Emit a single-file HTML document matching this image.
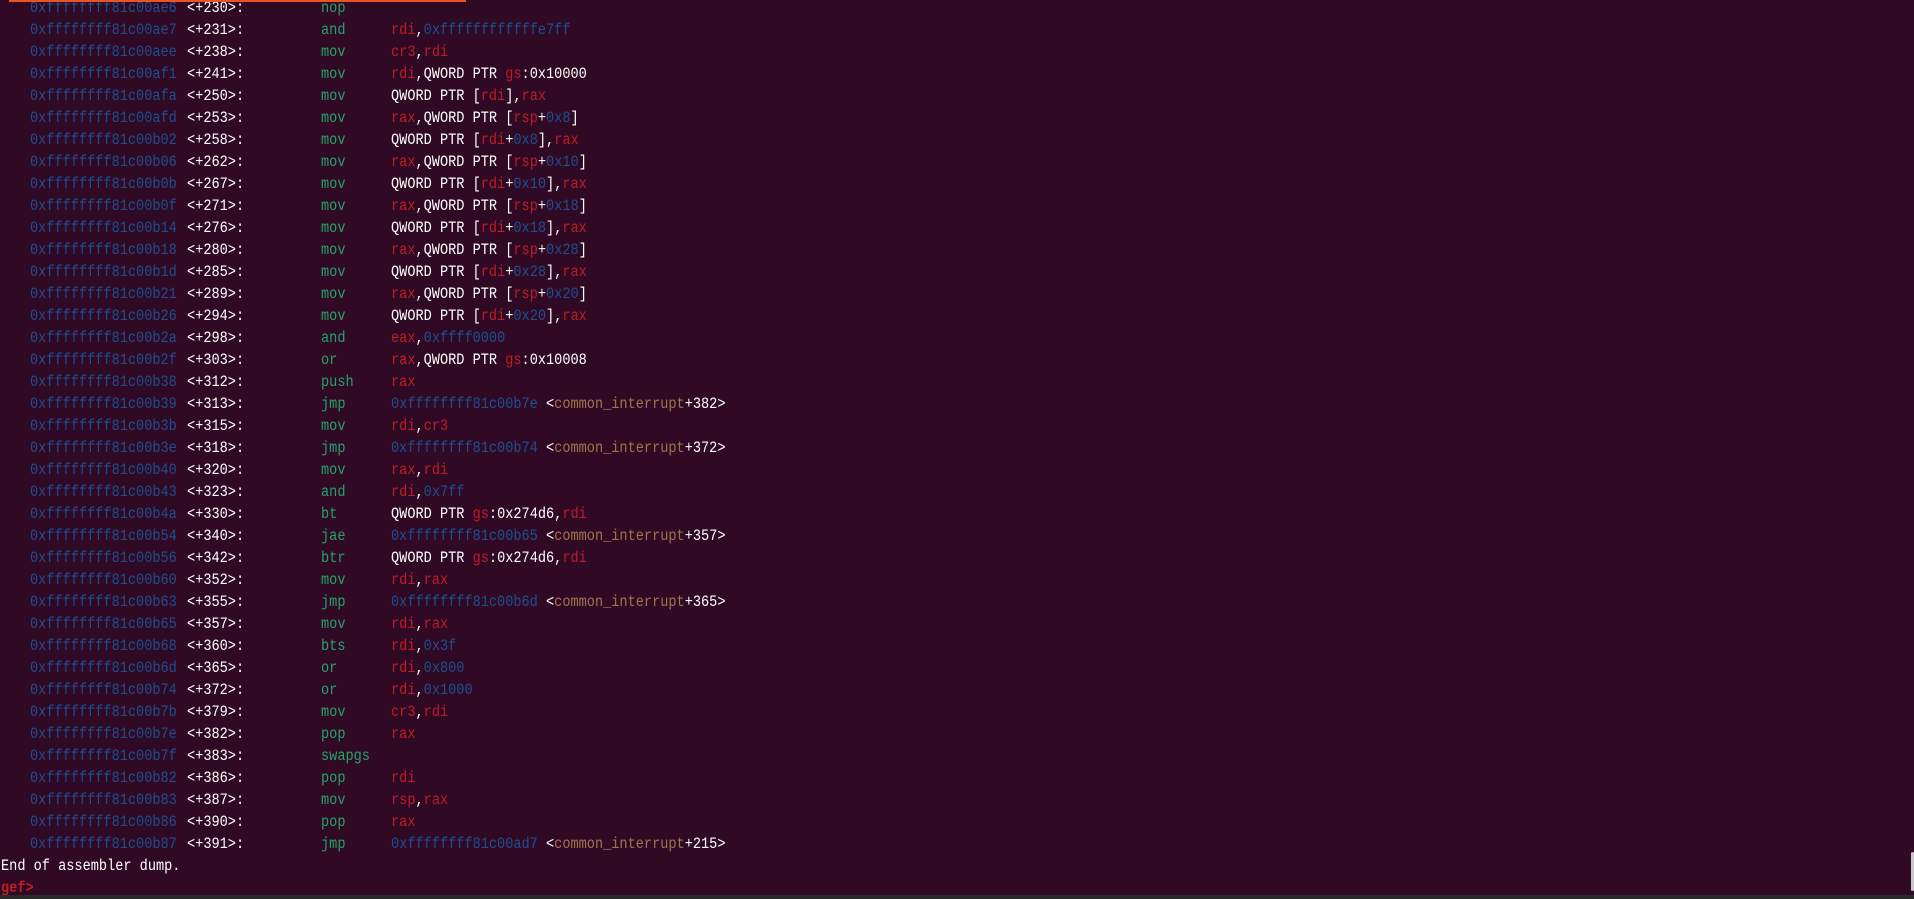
<!DOCTYPE html>
<html><head><meta charset="utf-8"><style>
html,body{margin:0;padding:0;width:1914px;height:899px;overflow:hidden;background:#300a24;}
body{position:relative;font-family:"Liberation Mono","DejaVu Sans Mono",monospace;font-size:13.6px;color:#fff;}
#w{position:absolute;left:0;top:3px;width:1914px;height:896px;}
.l{position:absolute;left:0;height:22px;line-height:22px;white-space:pre;width:1900px;}
.l span{position:absolute;top:0;transform:scaleY(1.15);transform-origin:50% 55%;}
.a{left:30px;color:#1d4f91}
.o{left:187px;color:#fff}
.m{left:321px;color:#26a269}
.p{left:391px;color:#fff}
.p i{font-style:normal}
.r{color:#c01c28}.b{color:#1d4f91}.y{color:#a2734c}
#bar{position:absolute;left:9px;top:0;width:457px;height:2px;background:#e95420;z-index:2}
#sb{position:absolute;left:1911px;top:852px;width:3px;height:39px;background:#c8c8c8;border-radius:2px}
#bot{position:absolute;left:0;top:895px;width:1914px;height:4px;background:#2a2a2a}
</style></head><body>
<div id="bar"></div>
<div id="w">
<div class="l" style="top:-4px"><span class="a">0xffffffff81c00ae6</span><span class="o">&lt;+230&gt;:</span><span class="m">nop</span></div>
<div class="l" style="top:18px"><span class="a">0xffffffff81c00ae7</span><span class="o">&lt;+231&gt;:</span><span class="m">and</span><span class="p"><i class="r">rdi</i>,<i class="b">0xffffffffffffe7ff</i></span></div>
<div class="l" style="top:40px"><span class="a">0xffffffff81c00aee</span><span class="o">&lt;+238&gt;:</span><span class="m">mov</span><span class="p"><i class="r">cr3</i>,<i class="r">rdi</i></span></div>
<div class="l" style="top:62px"><span class="a">0xffffffff81c00af1</span><span class="o">&lt;+241&gt;:</span><span class="m">mov</span><span class="p"><i class="r">rdi</i>,QWORD PTR <i class="r">gs</i>:0x10000</span></div>
<div class="l" style="top:84px"><span class="a">0xffffffff81c00afa</span><span class="o">&lt;+250&gt;:</span><span class="m">mov</span><span class="p">QWORD PTR [<i class="r">rdi</i>],<i class="r">rax</i></span></div>
<div class="l" style="top:106px"><span class="a">0xffffffff81c00afd</span><span class="o">&lt;+253&gt;:</span><span class="m">mov</span><span class="p"><i class="r">rax</i>,QWORD PTR [<i class="r">rsp</i>+<i class="b">0x8</i>]</span></div>
<div class="l" style="top:128px"><span class="a">0xffffffff81c00b02</span><span class="o">&lt;+258&gt;:</span><span class="m">mov</span><span class="p">QWORD PTR [<i class="r">rdi</i>+<i class="b">0x8</i>],<i class="r">rax</i></span></div>
<div class="l" style="top:150px"><span class="a">0xffffffff81c00b06</span><span class="o">&lt;+262&gt;:</span><span class="m">mov</span><span class="p"><i class="r">rax</i>,QWORD PTR [<i class="r">rsp</i>+<i class="b">0x10</i>]</span></div>
<div class="l" style="top:172px"><span class="a">0xffffffff81c00b0b</span><span class="o">&lt;+267&gt;:</span><span class="m">mov</span><span class="p">QWORD PTR [<i class="r">rdi</i>+<i class="b">0x10</i>],<i class="r">rax</i></span></div>
<div class="l" style="top:194px"><span class="a">0xffffffff81c00b0f</span><span class="o">&lt;+271&gt;:</span><span class="m">mov</span><span class="p"><i class="r">rax</i>,QWORD PTR [<i class="r">rsp</i>+<i class="b">0x18</i>]</span></div>
<div class="l" style="top:216px"><span class="a">0xffffffff81c00b14</span><span class="o">&lt;+276&gt;:</span><span class="m">mov</span><span class="p">QWORD PTR [<i class="r">rdi</i>+<i class="b">0x18</i>],<i class="r">rax</i></span></div>
<div class="l" style="top:238px"><span class="a">0xffffffff81c00b18</span><span class="o">&lt;+280&gt;:</span><span class="m">mov</span><span class="p"><i class="r">rax</i>,QWORD PTR [<i class="r">rsp</i>+<i class="b">0x28</i>]</span></div>
<div class="l" style="top:260px"><span class="a">0xffffffff81c00b1d</span><span class="o">&lt;+285&gt;:</span><span class="m">mov</span><span class="p">QWORD PTR [<i class="r">rdi</i>+<i class="b">0x28</i>],<i class="r">rax</i></span></div>
<div class="l" style="top:282px"><span class="a">0xffffffff81c00b21</span><span class="o">&lt;+289&gt;:</span><span class="m">mov</span><span class="p"><i class="r">rax</i>,QWORD PTR [<i class="r">rsp</i>+<i class="b">0x20</i>]</span></div>
<div class="l" style="top:304px"><span class="a">0xffffffff81c00b26</span><span class="o">&lt;+294&gt;:</span><span class="m">mov</span><span class="p">QWORD PTR [<i class="r">rdi</i>+<i class="b">0x20</i>],<i class="r">rax</i></span></div>
<div class="l" style="top:326px"><span class="a">0xffffffff81c00b2a</span><span class="o">&lt;+298&gt;:</span><span class="m">and</span><span class="p"><i class="r">eax</i>,<i class="b">0xffff0000</i></span></div>
<div class="l" style="top:348px"><span class="a">0xffffffff81c00b2f</span><span class="o">&lt;+303&gt;:</span><span class="m">or</span><span class="p"><i class="r">rax</i>,QWORD PTR <i class="r">gs</i>:0x10008</span></div>
<div class="l" style="top:370px"><span class="a">0xffffffff81c00b38</span><span class="o">&lt;+312&gt;:</span><span class="m">push</span><span class="p"><i class="r">rax</i></span></div>
<div class="l" style="top:392px"><span class="a">0xffffffff81c00b39</span><span class="o">&lt;+313&gt;:</span><span class="m">jmp</span><span class="p"><i class="b">0xffffffff81c00b7e</i> &lt;<i class="y">common_interrupt</i>+382&gt;</span></div>
<div class="l" style="top:414px"><span class="a">0xffffffff81c00b3b</span><span class="o">&lt;+315&gt;:</span><span class="m">mov</span><span class="p"><i class="r">rdi</i>,<i class="r">cr3</i></span></div>
<div class="l" style="top:436px"><span class="a">0xffffffff81c00b3e</span><span class="o">&lt;+318&gt;:</span><span class="m">jmp</span><span class="p"><i class="b">0xffffffff81c00b74</i> &lt;<i class="y">common_interrupt</i>+372&gt;</span></div>
<div class="l" style="top:458px"><span class="a">0xffffffff81c00b40</span><span class="o">&lt;+320&gt;:</span><span class="m">mov</span><span class="p"><i class="r">rax</i>,<i class="r">rdi</i></span></div>
<div class="l" style="top:480px"><span class="a">0xffffffff81c00b43</span><span class="o">&lt;+323&gt;:</span><span class="m">and</span><span class="p"><i class="r">rdi</i>,<i class="b">0x7ff</i></span></div>
<div class="l" style="top:502px"><span class="a">0xffffffff81c00b4a</span><span class="o">&lt;+330&gt;:</span><span class="m">bt</span><span class="p">QWORD PTR <i class="r">gs</i>:0x274d6,<i class="r">rdi</i></span></div>
<div class="l" style="top:524px"><span class="a">0xffffffff81c00b54</span><span class="o">&lt;+340&gt;:</span><span class="m">jae</span><span class="p"><i class="b">0xffffffff81c00b65</i> &lt;<i class="y">common_interrupt</i>+357&gt;</span></div>
<div class="l" style="top:546px"><span class="a">0xffffffff81c00b56</span><span class="o">&lt;+342&gt;:</span><span class="m">btr</span><span class="p">QWORD PTR <i class="r">gs</i>:0x274d6,<i class="r">rdi</i></span></div>
<div class="l" style="top:568px"><span class="a">0xffffffff81c00b60</span><span class="o">&lt;+352&gt;:</span><span class="m">mov</span><span class="p"><i class="r">rdi</i>,<i class="r">rax</i></span></div>
<div class="l" style="top:590px"><span class="a">0xffffffff81c00b63</span><span class="o">&lt;+355&gt;:</span><span class="m">jmp</span><span class="p"><i class="b">0xffffffff81c00b6d</i> &lt;<i class="y">common_interrupt</i>+365&gt;</span></div>
<div class="l" style="top:612px"><span class="a">0xffffffff81c00b65</span><span class="o">&lt;+357&gt;:</span><span class="m">mov</span><span class="p"><i class="r">rdi</i>,<i class="r">rax</i></span></div>
<div class="l" style="top:634px"><span class="a">0xffffffff81c00b68</span><span class="o">&lt;+360&gt;:</span><span class="m">bts</span><span class="p"><i class="r">rdi</i>,<i class="b">0x3f</i></span></div>
<div class="l" style="top:656px"><span class="a">0xffffffff81c00b6d</span><span class="o">&lt;+365&gt;:</span><span class="m">or</span><span class="p"><i class="r">rdi</i>,<i class="b">0x800</i></span></div>
<div class="l" style="top:678px"><span class="a">0xffffffff81c00b74</span><span class="o">&lt;+372&gt;:</span><span class="m">or</span><span class="p"><i class="r">rdi</i>,<i class="b">0x1000</i></span></div>
<div class="l" style="top:700px"><span class="a">0xffffffff81c00b7b</span><span class="o">&lt;+379&gt;:</span><span class="m">mov</span><span class="p"><i class="r">cr3</i>,<i class="r">rdi</i></span></div>
<div class="l" style="top:722px"><span class="a">0xffffffff81c00b7e</span><span class="o">&lt;+382&gt;:</span><span class="m">pop</span><span class="p"><i class="r">rax</i></span></div>
<div class="l" style="top:744px"><span class="a">0xffffffff81c00b7f</span><span class="o">&lt;+383&gt;:</span><span class="m">swapgs</span></div>
<div class="l" style="top:766px"><span class="a">0xffffffff81c00b82</span><span class="o">&lt;+386&gt;:</span><span class="m">pop</span><span class="p"><i class="r">rdi</i></span></div>
<div class="l" style="top:788px"><span class="a">0xffffffff81c00b83</span><span class="o">&lt;+387&gt;:</span><span class="m">mov</span><span class="p"><i class="r">rsp</i>,<i class="r">rax</i></span></div>
<div class="l" style="top:810px"><span class="a">0xffffffff81c00b86</span><span class="o">&lt;+390&gt;:</span><span class="m">pop</span><span class="p"><i class="r">rax</i></span></div>
<div class="l" style="top:832px"><span class="a">0xffffffff81c00b87</span><span class="o">&lt;+391&gt;:</span><span class="m">jmp</span><span class="p"><i class="b">0xffffffff81c00ad7</i> &lt;<i class="y">common_interrupt</i>+215&gt;</span></div>
<div class="l" style="top:854px"><span style="left:1px">End of assembler dump.</span></div>
<div class="l" style="top:876px"><span style="left:1px;color:#c01c28;font-weight:bold">gef&gt;</span></div>
</div>
<div id="sb"></div>
<div id="bot"></div>
</body></html>
